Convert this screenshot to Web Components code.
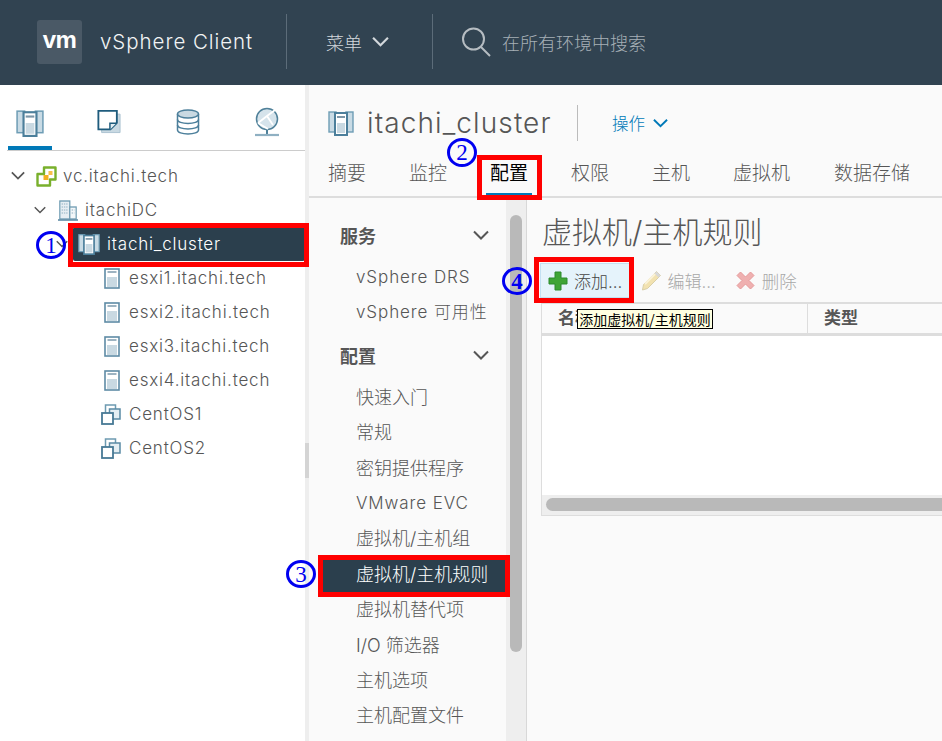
<!DOCTYPE html>
<html lang="zh"><head><meta charset="utf-8"><title>vSphere Client</title>
<style>
html,body{margin:0;padding:0;height:741px;width:942px;overflow:hidden;background:#fff}
body{font-family:"Inter","Noto Sans CJK SC",sans-serif;color:#565656}
</style></head><body>
<vs-app></vs-app>
<script>
const FONT = '"Inter","Noto Sans CJK SC",sans-serif';
const chev = (w, h, c, sw = 2) => `<svg width="${w}" height="${h}" viewBox="0 0 16 10" fill="none" stroke="${c}" stroke-width="${sw}"><path d="M1 1.5 8 8.5 15 1.5"/></svg>`;
const ICONS = {
  cluster: (s = 26) => `<svg width="${s}" height="${s}" viewBox="0 0 26 26"><rect x="1" y="2" width="7" height="20" fill="#c9dbe5" stroke="#6e9db5" stroke-width="1.4"/><rect x="18" y="2" width="7" height="20" fill="#c9dbe5" stroke="#6e9db5" stroke-width="1.4"/><rect x="7" y="3" width="12" height="22" fill="#fff" stroke="#4c7f9b" stroke-width="2"/><rect x="9" y="6" width="8" height="2" fill="#7d97a8"/><rect x="9" y="13" width="8" height="10" fill="#c9d9e2"/></svg>`,
  host: () => `<svg width="16" height="21" viewBox="0 0 16 21"><rect x="1" y="1" width="14" height="19" fill="#fff" stroke="#5e8ba5" stroke-width="1.6"/><rect x="3.5" y="3" width="9" height="2" fill="#9db3c1"/><rect x="3" y="9" width="10" height="10" fill="#c9d9e2"/></svg>`,
  vm: () => `<svg width="21" height="21" viewBox="0 0 21 21" fill="none"><rect x="4.5" y="1" width="10" height="10" fill="#fff" stroke="#6d9ab1" stroke-width="1.5"/><rect x="8.5" y="5" width="10.5" height="10" fill="#e4eef3" stroke="#5a8aa5" stroke-width="1.5"/><rect x="1" y="9" width="11" height="11" fill="#fff" stroke="#477995" stroke-width="1.8"/></svg>`,
  vc: () => `<svg width="21" height="21" viewBox="0 0 21 21"><path d="M8 1.5h11.5v12h-5.5v6H1.5V8H8z" fill="#fff" stroke="#79b02c" stroke-width="2.4" stroke-linejoin="round"/><rect x="7.5" y="9" width="5" height="5" fill="#f4b01f"/><rect x="12.5" y="5" width="4" height="4" fill="#f8c04a"/></svg>`,
  dc: () => `<svg width="20" height="21" viewBox="0 0 22 21" fill="none" preserveAspectRatio="none"><rect x="2" y="1" width="11" height="18" fill="#e6eef3" stroke="#6d9ab1" stroke-width="1.3"/><rect x="13" y="7" width="7" height="12" fill="#f3f7f9" stroke="#6d9ab1" stroke-width="1.3"/><path d="M4 4h7M4 7h7M4 10h7M4 13h7M15 10h3M15 13h3" stroke="#8fb0c2" stroke-width="1.2" stroke-dasharray="1.5 1"/><path d="M0 20h22" stroke="#5e8ba5" stroke-width="1.6"/></svg>`,
  note: () => `<svg width="24" height="25" viewBox="0 0 26 26" fill="none"><path d="M5 5h20v20H5z" fill="#c9d9e2" stroke="#a9c1cf" stroke-width="1"/><path d="M1.5 1.5h20v13l-7 7h-13z" fill="#fff" stroke="#1f5c7d" stroke-width="2"/><path d="M21 15h-7v7" fill="#e4eef3" stroke="#1f5c7d" stroke-width="1.6"/></svg>`,
  db: () => `<svg width="24" height="26" viewBox="0 0 24 26" fill="none" stroke="#4c7f9b" stroke-width="1.5"><path d="M1.5 5v16c0 2.400 4.700 4 10.500 4s10.500-1.600 10.500-4V5" fill="#fff"/><path d="M1.500 10.500c0 2.400 4.700 4 10.500 4s10.500-1.600 10.500-4M1.500 16c0 2.400 4.700 4 10.500 4s10.500-1.600 10.500-4"/><ellipse cx="12" cy="5" rx="10.500" ry="4" fill="#c9d9e2"/></svg>`,
  globe: () => `<svg width="26" height="30" viewBox="0 0 26 30" fill="none" stroke="#4f8099" stroke-width="1.5"><circle cx="13" cy="12" r="10.500" fill="#d5e3eb"/><path d="M4 16 13 9l8-6M13 9l6 9M4 16l10 6" stroke-width="1.800" stroke="#fff"/><path d="M13 23v4" stroke-width="2"/><path d="M1 28h24" stroke-width="2.200" stroke="#8fb0c2"/></svg>`,
  plus: () => `<svg width="20" height="20" viewBox="0 0 20 20"><path d="M7 1h6v6h6v6h-6v6H7v-6H1V7h6z" fill="#3fa535" stroke="#2c8a2c" stroke-width="1" stroke-linejoin="round"/></svg>`,
  pencil: () => `<svg width="21" height="21" viewBox="0 0 21 21"><path d="M15.500 1.500l4 4L6.500 18.500l-5 1.500 1-5.500z" fill="#f2e2b0" stroke="#d9cfa8" stroke-width="1"/><path d="M15.500 1.500l4 4-2 2-4-4z" fill="#d8d8d8"/><path d="M4 14l10-10" stroke="#fbf3d8" stroke-width="2"/></svg>`,
  cross: () => `<svg width="19" height="19" viewBox="0 0 19 19"><path d="M1 4.500l3.500-3.500 5 5 5-5 3.500 3.500-5 5 5 5-3.500 3.500-5-5-5 5-3.500-3.500 5-5z" fill="#efb0b0" stroke="#e59a9a" stroke-width="1" stroke-linejoin="round"/></svg>`
};

class VsHeader extends HTMLElement {
  constructor() {
    super();
    this.attachShadow({ mode: 'open' }).innerHTML = `<style>
:host{display:flex;align-items:center;height:85px;background:#314351;box-sizing:border-box;padding:0 0 2px 37px;color:#fff;font-family:${FONT}}
.logo{width:45px;height:44px;border-radius:3px;background:#4a5966;display:flex;align-items:center;justify-content:center;font:700 24px/1 "Liberation Sans",sans-serif;letter-spacing:-.5px;padding-bottom:4px;box-sizing:border-box}
.name{margin-left:18px;font-size:20.500px;font-weight:300;letter-spacing:.95px;width:186px;color:#f2f4f5;white-space:nowrap}
.div{width:1px;height:55px;background:#5c6c79}
.menu{display:flex;align-items:center;width:145px;padding-left:39px;box-sizing:border-box;font-size:18px;font-weight:300;color:#d3d8dc;gap:10px}
.search{display:flex;align-items:center;padding-left:28px;gap:11px;font-size:18px;font-weight:300;color:#a6afb6}
</style><div class="logo">vm</div><div class="name">vSphere Client</div><div class="div"></div>
<div class="menu"><span>菜单</span>${chev(17, 11, '#d3d8dc')}</div><div class="div"></div>
<div class="search"><svg width="30" height="31" viewBox="0 0 30 31" fill="none" stroke="#b6bdc2" stroke-width="2"><circle cx="12.5" cy="13" r="10.5"/><path d="M20 21 29 30"/></svg><span>在所有环境中搜索</span></div>`;
  }
}
customElements.define('vs-header', VsHeader);

class TreeRow extends HTMLElement {
  connectedCallback() {
    if (this.shadowRoot) return;
    const pad = this.getAttribute('pad') || 0;
    const icon = this.getAttribute('icon');
    const hasChev = this.hasAttribute('chev');
    const sel = this.hasAttribute('selected');
    const cw = this.getAttribute('chevw') || 14;
    const box = this.getAttribute('box') || 24;
    const gap = this.getAttribute('gap') || 7;
    const ic = icon === 'cluster' ? ICONS.cluster(22) : ICONS[icon]();
    this.attachShadow({ mode: 'open' }).innerHTML = `<style>
:host{display:flex;align-items:center;height:34px;padding-left:${pad}px;box-sizing:border-box;font-size:17px;font-weight:300;color:#565656;letter-spacing:.8px;white-space:nowrap}
.chev{width:${box}px;flex:none;display:flex;align-items:center}
.label{display:flex;align-items:center;gap:${gap}px;flex:1;height:100%}
.label.sel{background:#2b3f4d;color:#fff;padding-left:5px;border-radius:2px}
svg{display:block;flex:none}
</style>${hasChev ? `<span class="chev">${chev(cw, cw * .65, '#565656', 2)}</span>` : ''}<div class="label ${sel ? 'sel' : ''}">${ic}<slot></slot></div>`;
  }
}
customElements.define('tree-row', TreeRow);

class VsSidebar extends HTMLElement {
  constructor() {
    super();
    this.attachShadow({ mode: 'open' }).innerHTML = `<style>
:host{display:block;width:305px;flex:none;background:#fff;font-family:${FONT}}
.tabs{display:flex;gap:35px;height:65px;margin-left:8px;box-sizing:border-box}
.tab{width:44px;display:flex;justify-content:center;padding-top:24px;box-sizing:border-box;border-bottom:4px solid transparent}
.tab.on{border-bottom-color:#0079b8}
.rule{height:1px;background:#ccc;margin-left:7px}
.tree{padding-top:8px}
</style>
<div class="tabs"><div class="tab on">${ICONS.cluster(28)}</div><div class="tab">${ICONS.note()}</div><div class="tab">${ICONS.db()}</div><div class="tab" style="padding-top:22px">${ICONS.globe()}</div></div>
<div class="rule"></div>
<div class="tree">
<tree-row pad="11" chev box="25" gap="6" icon="vc">vc.itachi.tech</tree-row>
<tree-row pad="34" chev box="24" chevw="12" icon="dc">itachiDC</tree-row>
<tree-row pad="56" chev box="17" chevw="12" icon="cluster" selected>itachi_cluster</tree-row>
<tree-row pad="104" gap="9" icon="host">esxi1.itachi.tech</tree-row>
<tree-row pad="104" gap="9" icon="host">esxi2.itachi.tech</tree-row>
<tree-row pad="104" gap="9" icon="host">esxi3.itachi.tech</tree-row>
<tree-row pad="104" gap="9" icon="host">esxi4.itachi.tech</tree-row>
<tree-row pad="101" icon="vm">CentOS1</tree-row>
<tree-row pad="101" icon="vm">CentOS2</tree-row>
</div>`;
  }
}
customElements.define('vs-sidebar', VsSidebar);

class VsSplitter extends HTMLElement {
  constructor() {
    super();
    this.attachShadow({ mode: 'open' }).innerHTML = `<style>
:host{display:block;width:4px;flex:none;background:#eee;padding-top:358px;box-sizing:border-box}
div{height:35px;background:#d4d4d4}
</style><div></div>`;
  }
}
customElements.define('vs-splitter', VsSplitter);

class VsObjectHead extends HTMLElement {
  constructor() {
    super();
    this.attachShadow({ mode: 'open' }).innerHTML = `<style>
:host{display:flex;align-items:center;height:70px;padding:6px 0 0 19px;box-sizing:border-box;font-family:${FONT}}
.t{font-size:28px;font-weight:300;color:#565656;margin-left:13px;letter-spacing:1.1px;width:197px;white-space:nowrap;line-height:36px}
.d{width:1px;height:36px;background:#bbb;margin-left:13px}
.a{margin-left:34px;color:#0079b8;font-size:16.500px;display:flex;align-items:center;gap:8px;font-weight:300}
</style>${ICONS.cluster(26)}<div class="t">itachi_cluster</div><div class="d"></div><div class="a"><span>操作</span>${chev(15, 10, '#0079b8')}</div>`;
  }
}
customElements.define('vs-object-head', VsObjectHead);

class VsTabs extends HTMLElement {
  constructor() {
    super();
    const tabs = ['摘要', '监控', '配置', '权限', '主机', '虚拟机', '数据存储'];
    this.attachShadow({ mode: 'open' }).innerHTML = `<style>
:host{display:flex;gap:43px;height:43px;padding-left:19px;box-sizing:border-box;border-bottom:2px solid #ddd;font-family:${FONT};font-size:19px;font-weight:300;color:#565656;white-space:nowrap}
div{height:41px;line-height:38px;box-sizing:border-box;position:relative;flex:none}
div:last-child{margin-left:1px}
.on{color:#000;font-weight:400}
.on::after{content:"";position:absolute;left:-4px;right:-4px;bottom:-1px;height:4px;background:#0079b8}
</style>${tabs.map((t, i) => `<div class="${i === 2 ? 'on' : ''}">${t}</div>`).join('')}`;
  }
}
customElements.define('vs-tabs', VsTabs);

class VsNav extends HTMLElement {
  constructor() {
    super();
    const item = (t, c = '') => `<div class="i ${c}">${t}</div>`;
    this.attachShadow({ mode: 'open' }).innerHTML = `<style>
:host{display:flex;width:218px;flex:none;box-sizing:border-box;border-right:1px solid #d8d8d8;background:#fafafa;font-family:${FONT};overflow:hidden}
.list{width:197px;flex:none;padding-top:16px;box-sizing:border-box;font-size:18px;font-weight:300;color:#565656;white-space:nowrap}
.h{display:flex;align-items:center;justify-content:space-between;height:42px;padding:0 17px 0 31px;font-weight:700;font-size:18px;margin-bottom:4px}
.i{height:35.400px;line-height:35.400px;padding-left:47px;font-size:18px;letter-spacing:0}
.l{font-size:17px;letter-spacing:.9px}
.s{background:#2b3f4d;color:#fff;margin-left:14px;padding-left:33px}
.g{margin-top:3px}
.track{width:20px;flex:none;background:#eee;padding:17px 4px 0;box-sizing:border-box}
.thumb{height:437px;border-radius:6px;background:#b9b9b9}
</style><div class="list">
<div class="h"><span>服务</span>${chev(16, 10, '#565656')}</div>
${item('vSphere DRS', 'l')}${item('vSphere 可用性', 'l')}
<div class="h g"><span>配置</span>${chev(16, 10, '#565656')}</div>
${item('快速入门')}${item('常规')}${item('密钥提供程序')}${item('VMware EVC', 'l')}${item('虚拟机/主机组')}${item('虚拟机/主机规则', 's')}${item('虚拟机替代项')}${item('I/O 筛选器')}${item('主机选项')}${item('主机配置文件')}
</div><div class="track"><div class="thumb"></div></div>`;
  }
}
customElements.define('vs-nav', VsNav);

class VsButton extends HTMLElement {
  connectedCallback() {
    if (this.shadowRoot) return;
    const on = this.hasAttribute('active');
    this.attachShadow({ mode: 'open' }).innerHTML = `<style>
:host{display:flex;align-items:center;height:35px;gap:6px;padding:0 8px;box-sizing:border-box;font-size:17px;font-weight:300;color:${on ? '#444' : '#a8a8a8'};white-space:nowrap;
${on ? 'background:#e5f3fb;border:1px solid #c3e0f2;padding-left:7px;' : 'border:1px solid transparent;'}}
svg{display:block;flex:none}
</style>${ICONS[this.getAttribute('icon')]()}<span><slot></slot></span>`;
  }
}
customElements.define('vs-button', VsButton);

class VsRules extends HTMLElement {
  constructor() {
    super();
    this.attachShadow({ mode: 'open' }).innerHTML = `<style>
:host{display:block;flex:1;min-width:0;background:#fafafa;font-family:${FONT};padding-left:14px;box-sizing:border-box;overflow:hidden}
h1{margin:0;height:65px;line-height:68px;font-size:30px;font-weight:300;color:#565656;padding-left:1px;white-space:nowrap}
.tb{display:flex;align-items:center;margin-left:-1px}
.tb vs-button:last-child{margin-left:2px;--x:0;font-size:17.500px}
.tbl{margin-top:4px;width:500px;border:1px solid #ddd;border-right:0;border-top-width:2px;background:#fff;box-sizing:border-box}
.th{display:grid;grid-template-columns:265px 1fr;height:32px;background:#fafafa;border-bottom:3px solid #ddd;box-sizing:border-box;font-size:17px;font-weight:700;color:#565656}
.th div{padding-left:16px;line-height:29px}
.th div+div{border-left:1px solid #ddd}
.bd{height:159px;background:#fff}
.sb{height:20px;background:#eee;padding:3px 0 0 4px;box-sizing:border-box}
.sb div{height:13px;border-radius:7px;background:#b9b9b9}
</style><h1>虚拟机/主机规则</h1>
<div class="tb"><vs-button icon="plus" active>添加...</vs-button><vs-button icon="pencil" style="margin-left:1px;gap:5px">编辑...</vs-button><vs-button icon="cross" style="gap:7px">删除</vs-button></div>
<div class="tbl"><div class="th"><div>名称</div><div>类型</div></div><div class="bd"></div><div class="sb"><div></div></div></div>`;
  }
}
customElements.define('vs-rules', VsRules);

class VsMark extends HTMLElement {
  connectedCallback() {
    if (this.shadowRoot) return;
    const [x, y, w, h] = (this.getAttribute('box') || '0,0,0,0').split(',');
    const pos = `left:${x}px;top:${y}px;width:${w}px;height:${h}px;`;
    const digit = this.getAttribute('digit');
    const wt = this.getAttribute('weight') || 400;
    this.attachShadow({ mode: 'open' }).innerHTML = digit ?
      `<style>:host{position:absolute;${pos}box-sizing:border-box;border:3px solid #0000f0;border-radius:50%;display:flex;align-items:center;justify-content:center;color:#0000f0;font:${wt} 23px/1 "Liberation Serif",serif}</style>${digit}` :
      `<style>:host{position:absolute;${pos}box-sizing:border-box;border:5px solid #f00}</style>`;
  }
}
customElements.define('vs-mark', VsMark);

class VsTooltip extends HTMLElement {
  constructor() {
    super();
    this.attachShadow({ mode: 'open' }).innerHTML = `<style>
:host{position:absolute;left:577px;top:309px;width:136px;height:20px;box-sizing:border-box;border:1px solid #000;background:#ffffe1;color:#000;font:14px/18px "Noto Sans CJK SC",sans-serif;text-align:center;white-space:nowrap}
</style>添加虚拟机/主机规则`;
  }
}
customElements.define('vs-tooltip', VsTooltip);

class VsApp extends HTMLElement {
  constructor() {
    super();
    this.attachShadow({ mode: 'open' }).innerHTML = `<style>
:host{display:block;position:relative;width:942px;height:741px;overflow:hidden}
.body{display:flex;height:656px}
.right{flex:1;min-width:0;background:#fafafa;display:flex;flex-direction:column}
.split{display:flex;flex:1;min-height:0}
</style>
<vs-header></vs-header>
<div class="body"><vs-sidebar></vs-sidebar><vs-splitter></vs-splitter>
<div class="right"><vs-object-head></vs-object-head><vs-tabs></vs-tabs><div class="split"><vs-nav></vs-nav><vs-rules></vs-rules></div></div></div>
<vs-mark box="68,223,241,44"></vs-mark>
<vs-mark box="477,155,65,45"></vs-mark>
<vs-mark box="318,555,192,42"></vs-mark>
<vs-mark box="534,257,100,46"></vs-mark>
<vs-mark box="36,231,30,28" digit="1"></vs-mark>
<vs-mark box="447,138,30,29" digit="2"></vs-mark>
<vs-mark box="286,560,30,28" digit="3"></vs-mark>
<vs-mark box="502,267,30,28" digit="4" weight="700"></vs-mark>
<vs-tooltip></vs-tooltip>`;
  }
}
customElements.define('vs-app', VsApp);
</script></body></html>
